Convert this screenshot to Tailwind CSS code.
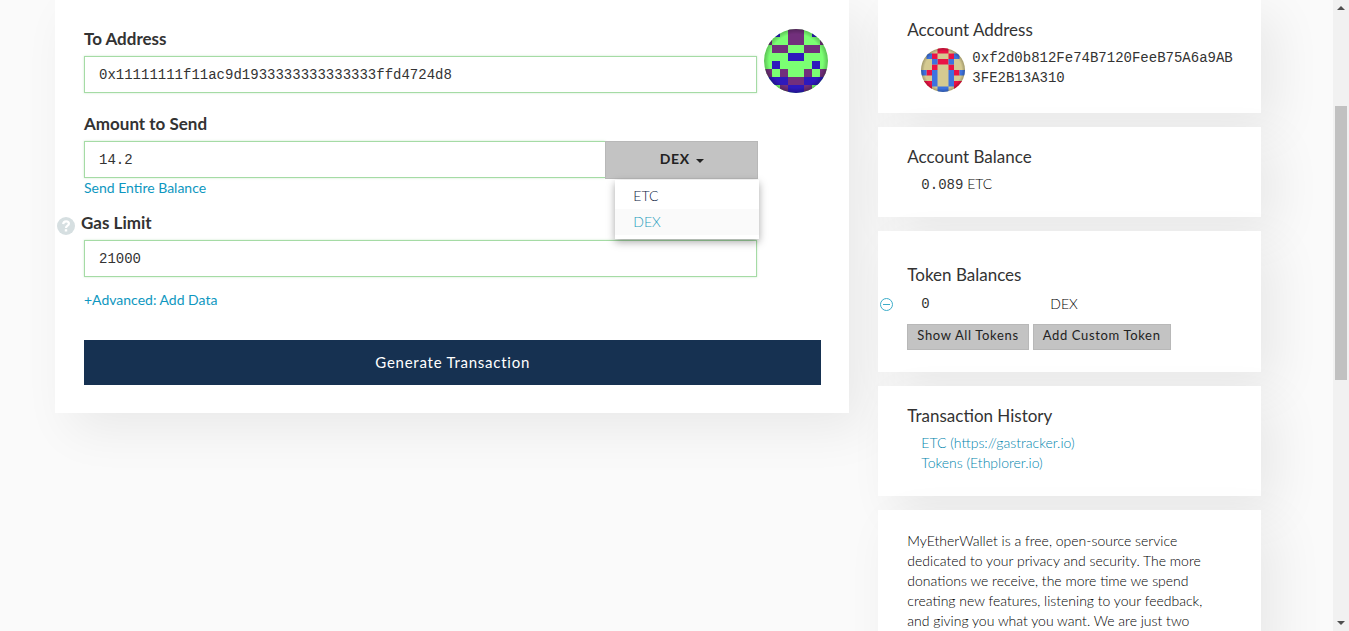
<!DOCTYPE html>
<html lang="en">
<head>
<meta charset="utf-8">
<meta name="viewport" content="width=device-width, initial-scale=1">
<title>MyEtherWallet</title>
<script src="https://cdn.jsdelivr.net/npm/@tailwindcss/browser@4"></script>
</head>
<body class="flex h-screen overflow-hidden bg-[#fafafa] font-['Lato',sans-serif] text-sm leading-5 text-[#333]">
<main class="grid min-w-0 flex-1 grid-cols-3 items-start gap-[29px] pr-[72px] pl-[55px]">
  <form class="col-span-2 bg-white pt-[29px] pr-7 pb-7 pl-[29px] shadow-[16px_16px_47px_0_rgba(0,0,0,0.07)]">
    <div class="-mr-[7px] flex gap-[7px]">
      <div class="min-w-0 flex-1">
        <label for="to" class="block h-[27px] text-[17px] leading-5 font-bold">To Address</label>
        <input id="to" type="text" value="0x11111111f11ac9d1933333333333333ffd4724d8" class="block h-[37px] w-full border border-[#a5dba5] px-3.5 font-['Liberation_Mono',monospace] text-sm shadow-[0_0_2px_rgba(165,219,165,0.6)]">
      </div>
      <svg class="size-16 shrink-0 rounded-full" viewBox="0 0 8 8" aria-hidden="true">
        <g shape-rendering="crispEdges">
          <path fill="#7bff73" d="M0 0h8v8H0z"/>
          <path fill="#722f7c" d="M3 0h2v2H3zM0 1h1v1H0zM7 1h1v1H7zM1 2h2v1H1zM5 2h2v1H5zM0 5h1v1H0zM2 5h1v1H2zM5 5h1v1H5zM7 5h1v1H7zM3 6h2v1H3zM2 7h1v1H2zM5 7h1v1H5z"/>
          <path fill="#2e19bc" d="M1 0h1v1H1zM6 0h1v1H6zM3 3h2v1H3zM1 4h1v1H1zM6 4h1v1H6zM0 6h3v1H0zM5 6h3v1H5zM3 7h2v1H3z"/>
        </g>
        <defs><radialGradient id="rim"><stop offset=".84" stop-opacity="0"/><stop offset="1" stop-opacity=".25"/></radialGradient></defs>
        <circle cx="4" cy="4" r="4" fill="url(#rim)"/>
      </svg>
    </div>
    <div class="mt-[21px] pr-[63px]">
      <label for="amount" class="block h-[27px] text-[17px] leading-5 font-bold">Amount to Send</label>
      <div class="relative flex h-[37px]">
        <input id="amount" type="text" value="14.2" class="block min-w-0 flex-1 border border-r-0 border-[#a5dba5] px-3.5 font-['Liberation_Mono',monospace] text-sm shadow-[0_0_2px_rgba(165,219,165,0.6)]">
        <button type="button" class="flex h-[38px] w-[153px] items-center justify-center gap-1.5 border border-[#b8b8b8] bg-[#c3c3c3] pb-0.5 text-sm font-bold tracking-wider text-[#222]">DEX
          <svg class="mt-1 h-1 w-2" viewBox="0 0 8 4" aria-hidden="true"><path fill="#222" d="M0 0h8L4 4z"/></svg>
        </button>
        <ul class="absolute top-[39px] -right-px z-10 w-36 bg-white pt-[3px] pb-1 font-light shadow-[0_3px_8px_rgba(0,0,0,0.35)]">
          <li><a href="#" class="block px-[18px] py-[3px] text-[#0b2342]">ETC</a></li>
          <li><a href="#" class="block bg-[#fafafa] px-[18px] py-[3px] text-[#1e9dbd]">DEX</a></li>
        </ul>
      </div>
      <a href="#" class="block text-[#0e97c0]">Send Entire Balance</a>
    </div>
    <div class="mt-[15px] pr-16">
      <div class="-ml-[27px] flex h-[27px] gap-1.5">
        <svg class="mt-1 size-[18px]" viewBox="0 0 18 18" role="img" aria-label="Help"><circle cx="9" cy="9" r="9" fill="#d6dfe1"/><path fill="none" stroke="#fff" stroke-width="2.2" d="M6.2 7.1C6.3 5.2 7.5 4.3 9.1 4.3c1.600 0 2.800.9 2.800 2.400C11.900 8.700 9 8.700 9 11"/><path fill="#fff" d="M7.800 12.200h2.400v2.300H7.800z"/></svg>
        <label for="gas" class="text-[17px] leading-5 font-bold">Gas Limit</label>
      </div>
      <input id="gas" type="text" value="21000" class="block h-[37px] w-full border border-[#a5dba5] px-3.5 font-['Liberation_Mono',monospace] text-sm shadow-[0_0_2px_rgba(165,219,165,0.6)]">
    </div>
    <a href="#" class="mt-[13px] block text-[#0e97c0]">+Advanced: Add Data</a>
    <button type="button" class="mt-[30px] block h-[45px] w-full bg-[#163151] pb-0.5 text-[15px] tracking-wider text-white">Generate Transaction</button>
  </form>

  <aside class="flex min-w-0 flex-col gap-3.5 font-light text-black">
    <section class="bg-white px-[29px] pt-5 pb-[21px] shadow-[16px_16px_47px_0_rgba(0,0,0,0.07)]">
      <h2 class="text-[17px] leading-5 font-normal text-[#333]">Account Address</h2>
      <div class="mt-2 ml-3.5 flex gap-[7px]">
        <svg class="size-11 shrink-0 rounded-full" viewBox="0 0 8 8" aria-hidden="true">
          <path fill="#d5ca91" d="M0 0h8v8H0z"/>
          <path fill="#ea1245" d="M3 0h2v1H3zM2 1h1v1H2zM5 1h1v1H5zM3 2h2v1H3zM2 3h1v1H2zM5 3h1v1H5zM1 4h1v1H1zM6 4h1v1H6zM0 6h2v1H0zM6 6h2v1H6zM1 7h1v1H1zM6 7h1v1H6z"/>
          <path fill="#3d72df" d="M1 1h1v1H1zM6 1h1v1H6zM2 2h1v1H2zM5 2h1v1H5zM0 4h1v1H0zM7 4h1v1H7zM2 4h1v3H2zM5 4h1v3H5zM3 7h2v1H3z"/>
          <circle cx="4" cy="4" r="4" fill="url(#rim)"/>
        </svg>
        <p class="-mr-2 min-w-0 flex-1 font-['Liberation_Mono',monospace] font-normal break-all text-[#333]">0xf2d0b812Fe74B7120FeeB75A6a9AB<wbr>3FE2B13A310</p>
      </div>
    </section>
    <section class="bg-white px-[29px] pt-5 pb-[22px] shadow-[16px_16px_47px_0_rgba(0,0,0,0.07)]">
      <h2 class="text-[17px] leading-5 font-normal text-[#333]">Account Balance</h2>
      <p class="mt-[7px] ml-3.5"><span class="font-['Liberation_Mono',monospace] font-normal text-[#333]">0.089</span> ETC</p>
    </section>
    <section class="bg-white px-[29px] pt-[34px] pb-[22px] shadow-[16px_16px_47px_0_rgba(0,0,0,0.07)]">
      <h2 class="text-[17px] leading-5 font-normal text-[#333]">Token Balances</h2>
      <table class="mt-[9px] -ml-[27px]">
        <tr>
          <td class="w-[41px] p-0"><button type="button" aria-label="Remove token" class="block"><svg class="size-[13px]" viewBox="0 0 13 13" fill="none" stroke="#3cacc9"><circle cx="6.500" cy="6.500" r="6"/><path d="M3 6.500h7"/></svg></button></td>
          <td class="w-[129px] p-0 font-['Liberation_Mono',monospace] font-normal text-[#333]">0</td>
          <td class="p-0">DEX</td>
        </tr>
      </table>
      <div class="mt-[10px] flex gap-1">
        <button type="button" class="h-[26px] border border-[#b8b8b8] bg-[#c3c3c3] px-[9px] pb-1.5 text-[13px] font-normal tracking-wider whitespace-nowrap text-[#222]">Show All Tokens</button>
        <button type="button" class="h-[26px] border border-[#b8b8b8] bg-[#c3c3c3] px-[9px] pb-1.5 text-[13px] font-normal tracking-wider whitespace-nowrap text-[#222]">Add Custom Token</button>
      </div>
    </section>
    <section class="bg-white px-[29px] pt-5 pb-[23px] shadow-[16px_16px_47px_0_rgba(0,0,0,0.07)]">
      <h2 class="text-[17px] leading-5 font-normal text-[#333]">Transaction History</h2>
      <ul class="mt-[7px] ml-3.5 text-[#0085ad]">
        <li><a href="#">ETC (https://gastracker.io)</a></li>
        <li><a href="#">Tokens (Ethplorer.io)</a></li>
      </ul>
    </section>
    <section class="bg-white px-[29px] pt-[21px] pb-7 shadow-[16px_16px_47px_0_rgba(0,0,0,0.07)]">
      <p>MyEtherWallet is a free, open-source service<br>dedicated to your privacy and security. The more<br>donations we receive, the more time we spend<br>creating new features, listening to your feedback,<br>and giving you what you want. We are just two</p>
    </section>
  </aside>
</main>
<div class="flex w-4 shrink-0 flex-col items-center bg-[#f1f1f1] py-1.5" aria-hidden="true">
  <svg class="h-1 w-2" viewBox="0 0 8 4"><path fill="#505050" d="M0 4h8L4 0z"/></svg>
  <div class="mt-24 h-[274px] w-3 bg-[#c1c1c1]"></div>
  <svg class="mt-auto h-1 w-2" viewBox="0 0 8 4"><path fill="#505050" d="M0 0h8L4 4z"/></svg>
</div>
</body>
</html>
